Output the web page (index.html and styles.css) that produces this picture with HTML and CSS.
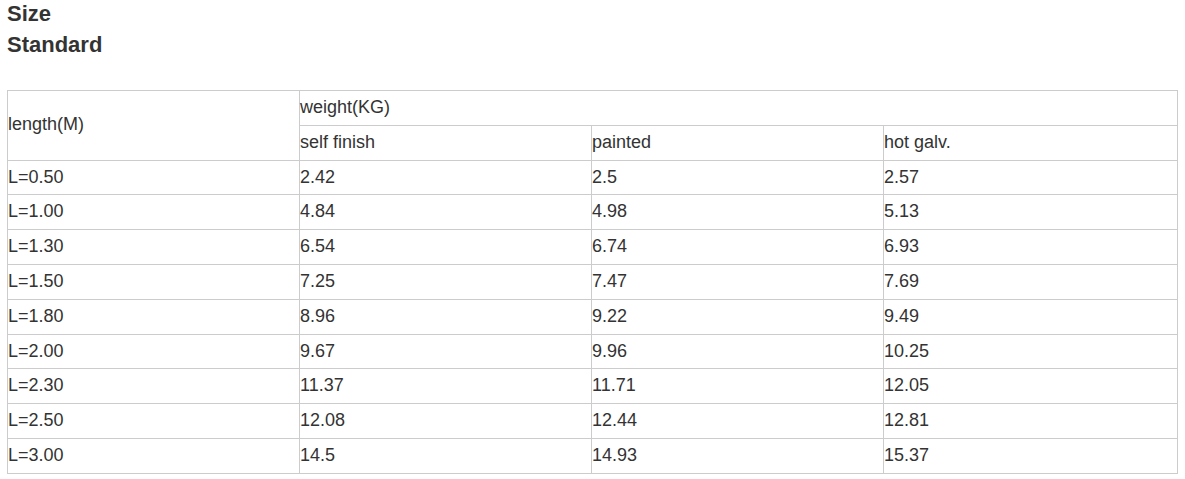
FILE: index.html
```html
<!DOCTYPE html>
<html>
<head>
<meta charset="utf-8">
<link rel="stylesheet" href="styles.css">
</head>
<body>
<div class="page">
  <div class="titles">
    <div class="title">Size</div>
    <div class="title">Standard</div>
  </div>
  <table class="spec">
    <colgroup><col><col><col><col></colgroup>
    <tr><td rowspan="2">length(M)</td><td colspan="3">weight(KG)</td></tr>
    <tr><td>self finish</td><td>painted</td><td>hot galv.</td></tr>
    <tr><td>L=0.50</td><td>2.42</td><td>2.5</td><td>2.57</td></tr>
    <tr><td>L=1.00</td><td>4.84</td><td>4.98</td><td>5.13</td></tr>
    <tr><td>L=1.30</td><td>6.54</td><td>6.74</td><td>6.93</td></tr>
    <tr><td>L=1.50</td><td>7.25</td><td>7.47</td><td>7.69</td></tr>
    <tr><td>L=1.80</td><td>8.96</td><td>9.22</td><td>9.49</td></tr>
    <tr><td>L=2.00</td><td>9.67</td><td>9.96</td><td>10.25</td></tr>
    <tr><td>L=2.30</td><td>11.37</td><td>11.71</td><td>12.05</td></tr>
    <tr><td>L=2.50</td><td>12.08</td><td>12.44</td><td>12.81</td></tr>
    <tr><td>L=3.00</td><td>14.5</td><td>14.93</td><td>15.37</td></tr>
  </table>
</div>
</body>
</html>
```
FILE: styles.css
```css
html, body {
  margin: 0;
  padding: 0;
  background: #fff;
}
body {
  font-family: "Liberation Sans", Arial, sans-serif;
  color: #333;
}
.page {
  padding: 0 7px;
}
.titles {
  margin-top: -2px;
}
.title {
  font-size: 22px;
  font-weight: bold;
  line-height: 31px;
}
.spec {
  margin-top: 30px;
  width: 100%;
  border-collapse: collapse;
  table-layout: fixed;
  font-size: 18px;
}
.spec td {
  border: 1px solid #ccc;
  padding: 6px 0 7px 0;
  line-height: 20.8px;
  height: 20.8px;
  vertical-align: middle;
  text-align: left;
}
.spec col:last-child {
  width: 294px;
}
```
